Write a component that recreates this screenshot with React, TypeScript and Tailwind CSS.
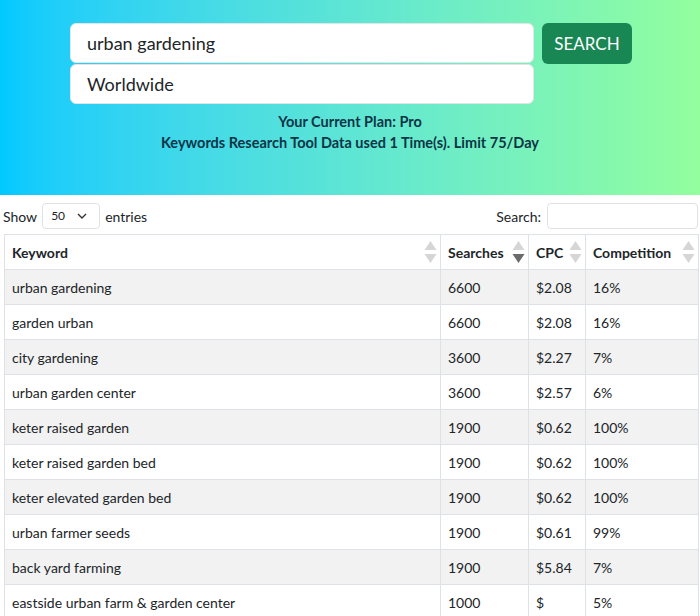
import React from 'react'

const ROWS = [
  ['urban gardening', '6600', '$2.08', '16%'],
  ['garden urban', '6600', '$2.08', '16%'],
  ['city gardening', '3600', '$2.27', '7%'],
  ['urban garden center', '3600', '$2.57', '6%'],
  ['keter raised garden', '1900', '$0.62', '100%'],
  ['keter raised garden bed', '1900', '$0.62', '100%'],
  ['keter elevated garden bed', '1900', '$0.62', '100%'],
  ['urban farmer seeds', '1900', '$0.61', '99%'],
  ['back yard farming', '1900', '$5.84', '7%'],
  ['eastside urban farm & garden center', '1000', '$', '5%'],
]

function SortArrows({ active }: { active?: boolean }) {
  return (
    <svg width="13" height="24" viewBox="0 0 13 24" className="shrink-0">
      <path d="M6.5 1 L12.5 10 L0.5 10 Z" fill="#d6d6d6" />
      <path d="M0.5 14 L12.5 14 L6.5 23 Z" fill={active ? '#6b6b6b' : '#d6d6d6'} />
    </svg>
  )
}

export default function App() {
  return (
    <div className="w-[700px] h-[616px] overflow-hidden bg-white font-['Lato','Noto_Sans',sans-serif] text-[#212529]">
      {/* Search header */}
      <div className="h-[195px] bg-gradient-to-r from-[#00c9ff] to-[#92fe9d] pt-[23px]">
        <div className="flex gap-2 pl-[70px]">
          <div className="flex flex-col gap-px w-[464px]">
            <div className="h-10 bg-white rounded-md border border-[#e3e6e8] flex items-center px-4 text-[18px] text-[#212529]">
              urban gardening
            </div>
            <div className="h-10 bg-white rounded-md border border-[#e3e6e8] flex items-center px-4 text-[18px] text-[#212529]">
              Worldwide
            </div>
          </div>
          <button className="h-[41px] w-[90px] bg-[#198754] rounded-md text-white text-[17px]">
            SEARCH
          </button>
        </div>
        <div className="mt-[7px] text-center text-[#0c3547] font-bold text-[14.5px] leading-[21px]">
          <p>Your Current Plan: Pro</p>
          <p>Keywords Research Tool Data used 1 Time(s). Limit 75/Day</p>
        </div>
      </div>

      {/* Controls */}
      <div className="flex items-center justify-between pl-[3px] pr-[2px] pt-2 pb-[5px] text-[14px]">
        <div className="flex items-center gap-[5px]">
          <span>Show</span>
          <div className="w-[58px] h-[26px] border border-[#dee2e6] rounded flex items-center justify-between pl-2 pr-3 text-[12px]">
            <span>50</span>
            <svg width="10" height="6" viewBox="0 0 10 6">
              <path d="M1 1 L5 5 L9 1" fill="none" stroke="#333" strokeWidth="1.4" />
            </svg>
          </div>
          <span>entries</span>
        </div>
        <div className="flex items-center gap-[6px]">
          <span>Search:</span>
          <div className="w-[151px] h-[26px] border border-[#dee2e6] rounded" />
        </div>
      </div>

      {/* Table */}
      <table className="ml-1 w-[694px] border-collapse text-[14px] table-fixed">
        <colgroup>
          <col className="w-[436px]" />
          <col className="w-[88px]" />
          <col className="w-[57px]" />
          <col className="w-[113px]" />
        </colgroup>
        <thead>
          <tr className="h-[35px]">
            {['Keyword', 'Searches', 'CPC', 'Competition'].map((h, i) => (
              <th key={h} className="border border-[#dee2e6] pl-[7px] pr-[3px] text-left font-bold">
                <div className="flex items-center justify-between">
                  <span>{h}</span>
                  <SortArrows active={i === 1} />
                </div>
              </th>
            ))}
          </tr>
        </thead>
        <tbody>
          {ROWS.map((r, i) => (
            <tr key={i} className={i % 2 === 0 ? 'h-[35px] bg-[#f2f2f2]' : 'h-[35px] bg-white'}>
              {r.map((c, j) => (
                <td key={j} className="border border-[#dee2e6] px-[7px]">
                  {c}
                </td>
              ))}
            </tr>
          ))}
        </tbody>
      </table>
    </div>
  )
}
